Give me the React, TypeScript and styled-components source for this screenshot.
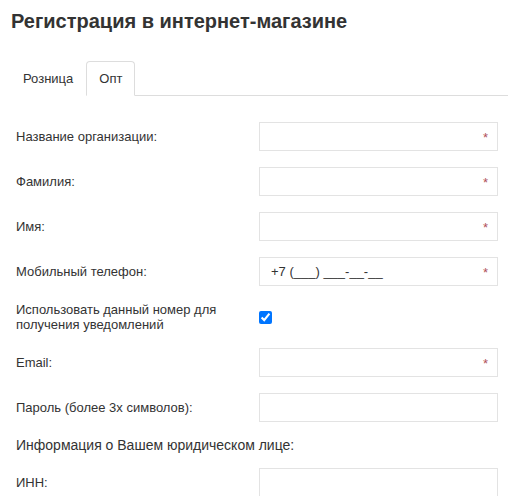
import React from 'react';
import styled, { createGlobalStyle } from 'styled-components';

const GlobalStyle = createGlobalStyle`
  body {
    margin: 0;
    background: #fff;
    font-family: "Liberation Sans", Arial, sans-serif;
    color: #333;
  }
`;

interface Field {
  label: string;
  required?: boolean;
  placeholder?: string;
}

const topFields: Field[] = [
  { label: 'Название организации:', required: true },
  { label: 'Фамилия:', required: true },
  { label: 'Имя:', required: true },
  { label: 'Мобильный телефон:', required: true, placeholder: '+7 (___) ___-__-__' },
];

const bottomFields: Field[] = [
  { label: 'Email:', required: true },
  { label: 'Пароль (более 3х символов):' },
];

function FieldRow({ label, required, placeholder }: Field) {
  return (
    <Row>
      <Label>{label}</Label>
      <InputBox>
        {placeholder && <Placeholder>{placeholder}</Placeholder>}
        {required && <Star>*</Star>}
      </InputBox>
    </Row>
  );
}

function App() {
  return (
    <Page>
      <GlobalStyle />
      <Title>Регистрация в интернет-магазине</Title>
      <Tabs>
        <Tab>Розница</Tab>
        <Tab active>Опт</Tab>
      </Tabs>
      <Form>
        {topFields.map((f) => (
          <FieldRow key={f.label} {...f} />
        ))}
        <Row>
          <Label>
            Использовать данный номер для
            <br />
            получения уведомлений
          </Label>
          <CheckCell>
            <Check type="checkbox" defaultChecked />
          </CheckCell>
        </Row>
        {bottomFields.map((f) => (
          <FieldRow key={f.label} {...f} />
        ))}
        <Section>Информация о Вашем юридическом лице:</Section>
        <FieldRow label="ИНН:" />
      </Form>
    </Page>
  );
}

const Page = styled.div`
  padding: 9px 0 0 10px;
`;

const Title = styled.h1`
  margin: 0;
  padding-left: 1px;
  font-size: 20px;
  line-height: 24px;
  font-weight: bold;
  color: #333;
`;

const Tabs = styled.div`
  display: flex;
  margin-top: 28px;
  border-bottom: 1px solid #ddd;
`;

const Tab = styled.div<{ active?: boolean }>`
  padding: 0 12px;
  height: 33px;
  line-height: 33px;
  margin-right: 0;
  margin-bottom: -1px;
  font-size: 13px;
  color: #333;
  border: 1px solid ${({ active }) => (active ? '#ddd' : 'transparent')};
  border-bottom-color: ${({ active }) => (active ? '#fff' : 'transparent')};
  border-radius: 4px 4px 0 0;
  background: #fff;
`;

const Form = styled.div`
  padding: 26px 0 0 6px;
`;

const Row = styled.div`
  display: grid;
  grid-template-columns: 243px 239px;
  align-items: center;
  margin-bottom: 16px;
`;

const Label = styled.div`
  font-size: 13px;
  line-height: 15px;
  color: #333;
`;

const InputBox = styled.div`
  position: relative;
  height: 29px;
  box-sizing: border-box;
  border: 1px solid #e3e3e3;
  background: #fff;
  display: flex;
  align-items: center;
  padding-left: 11px;
`;

const Placeholder = styled.span`
  font-size: 13px;
  color: #333;
`;

const Star = styled.span`
  position: absolute;
  right: 9px;
  top: 7px;
  font-size: 13px;
  color: #b0505a;
`;

const CheckCell = styled.div`
  height: 30px;
  display: flex;
  align-items: center;
`;

const Check = styled.input`
  margin: 0;
  width: 13px;
  height: 13px;
  accent-color: #0075ff;
`;

const Section = styled.div`
  font-size: 14px;
  line-height: 15px;
  color: #333;
  margin-bottom: 15px;
`;

export default App;
